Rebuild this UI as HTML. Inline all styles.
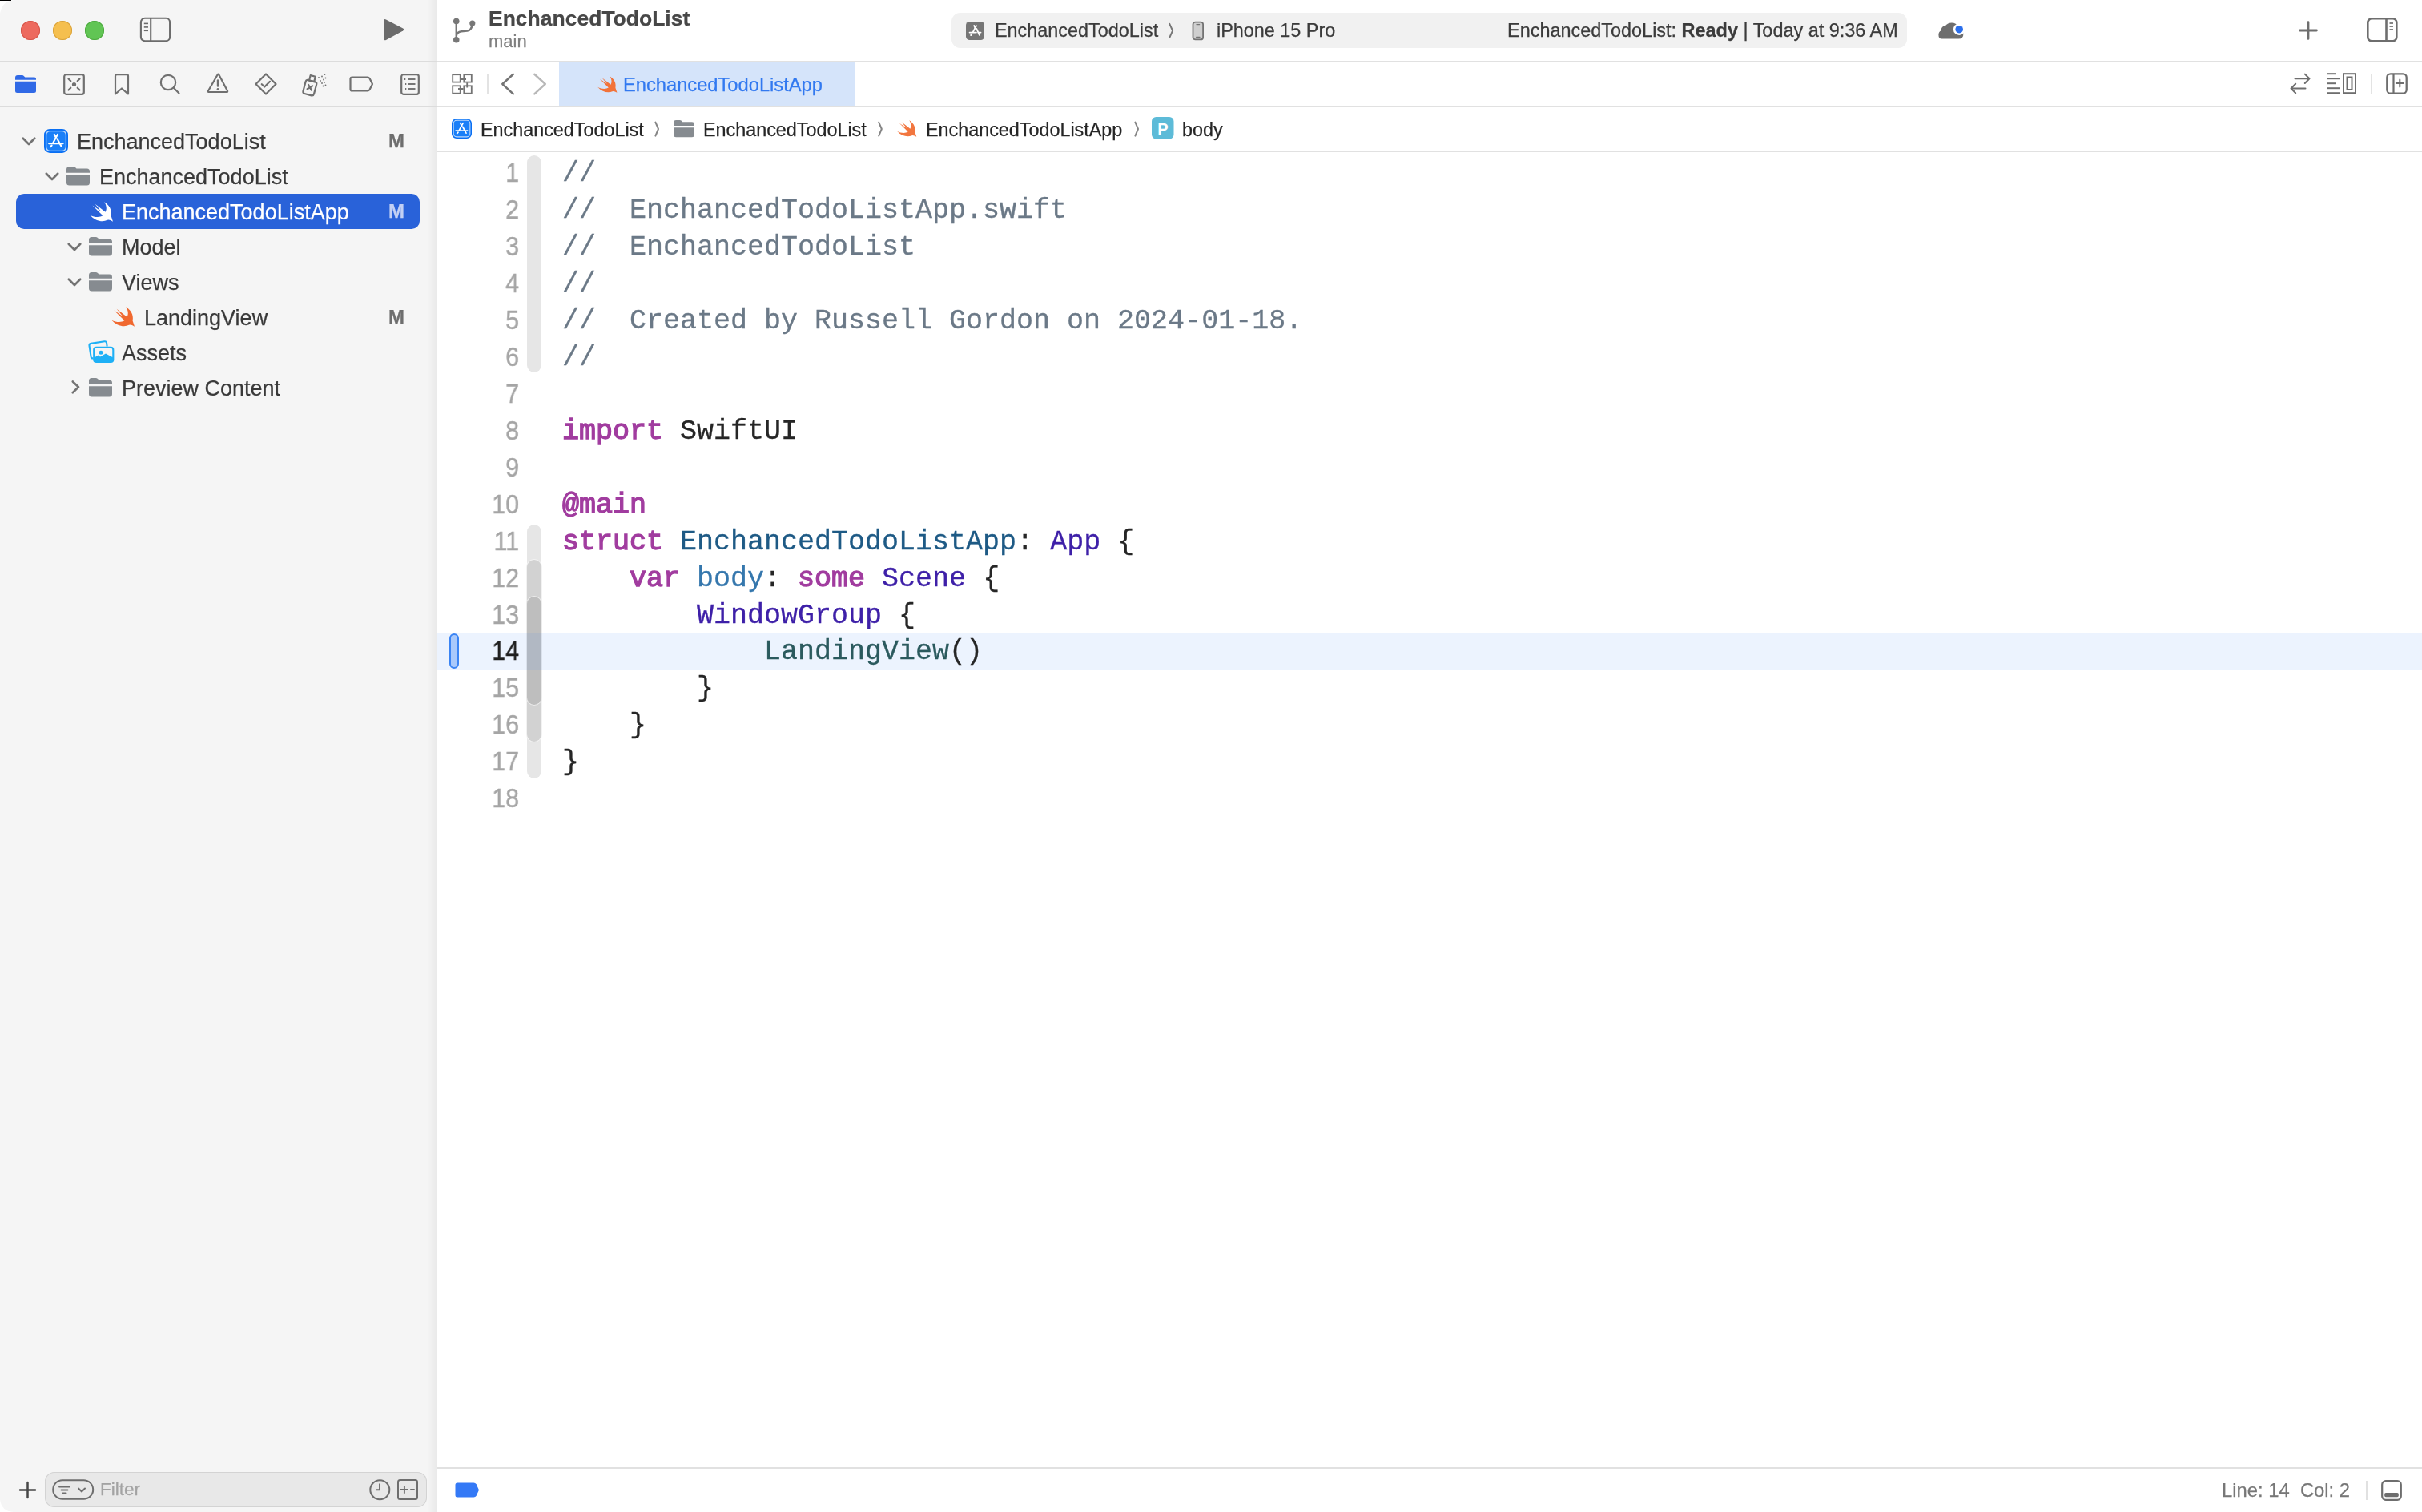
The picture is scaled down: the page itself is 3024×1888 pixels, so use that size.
<!DOCTYPE html>
<html><head><meta charset="utf-8"><title>Xcode</title>
<style>
html,body{margin:0;padding:0;}
body{width:3024px;height:1888px;position:relative;overflow:hidden;background:#ffffff;font-family:"Liberation Sans",sans-serif;}
svg{overflow:visible}
div{will-change:transform}
</style></head><body>
<div style="position:absolute;left:0px;top:0px;width:545px;height:1888px;background:#f5f5f5;"></div>
<div style="position:absolute;left:533px;top:0px;width:12px;height:1888px;background:linear-gradient(to right, rgba(0,0,0,0), rgba(0,0,0,0.045));"></div>
<div style="position:absolute;left:545px;top:0px;width:1px;height:1888px;background:#dddddd;"></div>
<div style="position:absolute;left:0px;top:76px;width:545px;height:2px;background:#dcdcdc;"></div>
<div style="position:absolute;left:546px;top:76px;width:2478px;height:2px;background:#e1e1e1;"></div>
<div style="position:absolute;left:0px;top:132px;width:545px;height:2px;background:#dcdcdc;"></div>
<div style="position:absolute;left:546px;top:132px;width:2478px;height:2px;background:#e1e1e1;"></div>
<div style="position:absolute;left:546px;top:188px;width:2478px;height:2px;background:#e1e1e1;"></div>
<div style="position:absolute;left:546px;top:1832px;width:2478px;height:2px;background:#e1e1e1;"></div>
<div style="position:absolute;left:25.7px;top:25.8px;width:24px;height:24px;border-radius:50%;background:#ed6a5e;box-shadow:inset 0 0 0 1px #d55549"></div>
<div style="position:absolute;left:66.0px;top:25.8px;width:24px;height:24px;border-radius:50%;background:#f5bf4f;box-shadow:inset 0 0 0 1px #d9a23c"></div>
<div style="position:absolute;left:106.0px;top:25.8px;width:24px;height:24px;border-radius:50%;background:#61c554;box-shadow:inset 0 0 0 1px #4ea940"></div>
<svg style="position:absolute;left:174px;top:21px;" width="40" height="32" viewBox="0 0 40 32"><rect x="1.9" y="1.7" width="36.2" height="28.6" rx="5" fill="none" stroke="#6b6b6b" stroke-width="2.1"/><line x1="14.2" y1="2" x2="14.2" y2="30" stroke="#6b6b6b" stroke-width="2.1"/><g stroke="#6b6b6b" stroke-width="1.6"><line x1="5.8" y1="8.4" x2="11" y2="8.4"/><line x1="5.8" y1="12.9" x2="11" y2="12.9"/><line x1="5.8" y1="17.3" x2="11" y2="17.3"/></g></svg>
<svg style="position:absolute;left:478px;top:23px;" width="28" height="30" viewBox="0 0 28 30"><path d="M1.2 3.2 Q1.2 0.2 4 1.5 L25.2 12.6 Q27.6 14 25.2 15.4 L4 26.9 Q1.2 28.3 1.2 25.2 Z" fill="#6b6b6b"/></svg>
<svg style="position:absolute;left:19px;top:93px;" width="27" height="24" viewBox="0 0 27 24"><path d="M0 4 Q0 1 3 1 L8.5 1 Q10 1 11 2.2 L12.3 3.5 L24 3.5 Q26 3.5 26 5.5 L26 6.8 L0 6.8 Z" fill="#3069e6"/><path d="M0 8.8 L26 8.8 L26 20.5 Q26 23 23.5 23 L2.5 23 Q0 23 0 20.5 Z" fill="#3069e6"/></svg>
<svg style="position:absolute;left:79px;top:92px;" width="27" height="27" viewBox="0 0 27 27"><rect x="1.2" y="1.2" width="24.6" height="24.6" rx="2.5" fill="none" stroke="#707070" stroke-width="2.2" stroke-linecap="round" stroke-linejoin="round"/><circle cx="13.5" cy="13.5" r="2.6" fill="#707070"/><path d="M6.5 6.5 L9.3 9.3 M20.5 6.5 L17.7 9.3 M6.5 20.5 L9.3 17.7 M20.5 20.5 L17.7 17.7" fill="none" stroke="#707070" stroke-width="2.2" stroke-linecap="round" stroke-linejoin="round" stroke-width="1.8"/></svg>
<svg style="position:absolute;left:142px;top:92px;" width="20" height="27" viewBox="0 0 20 27"><path d="M2 25.5 L2 3 Q2 1.2 3.8 1.2 L16.2 1.2 Q18 1.2 18 3 L18 25.5 L10 18.5 Z" fill="none" stroke="#707070" stroke-width="2.2" stroke-linecap="round" stroke-linejoin="round"/></svg>
<svg style="position:absolute;left:199px;top:92px;" width="27" height="27" viewBox="0 0 27 27"><circle cx="11" cy="11" r="9.2" fill="none" stroke="#707070" stroke-width="2.2" stroke-linecap="round" stroke-linejoin="round" stroke-width="2.3"/><line x1="17.8" y1="17.8" x2="24.5" y2="24.5" fill="none" stroke="#707070" stroke-width="2.2" stroke-linecap="round" stroke-linejoin="round" stroke-width="2.8"/></svg>
<svg style="position:absolute;left:259px;top:91px;" width="27" height="27" viewBox="0 0 27 27"><path d="M13 1.8 Q13.8 1.5 14.4 2.4 L25 22.5 Q25.6 24 24 24 L2 24 Q0.4 24 1 22.5 Z" fill="none" stroke="#707070" stroke-width="2.2" stroke-linecap="round" stroke-linejoin="round"/><line x1="13" y1="9.5" x2="13" y2="16.5" stroke="#707070" stroke-width="2.4" stroke-linecap="round"/><circle cx="13" cy="20.3" r="1.3" fill="#707070"/></svg>
<svg style="position:absolute;left:318px;top:91px;" width="28" height="28" viewBox="0 0 28 28"><path d="M14 1.5 L26.5 14 L14 26.5 L1.5 14 Z" fill="none" stroke="#707070" stroke-width="2.2" stroke-linecap="round" stroke-linejoin="round"/><path d="M8.8 14.2 L12.3 17.5 L19 10.8" fill="none" stroke="#707070" stroke-width="2.2" stroke-linecap="round" stroke-linejoin="round" stroke-width="2"/></svg>
<svg style="position:absolute;left:377px;top:91px;" width="32" height="30" viewBox="0 0 32 30"><g transform="rotate(15 10 18)"><rect x="3" y="10" width="14" height="17.5" rx="2.5" fill="none" stroke="#707070" stroke-width="2.2" stroke-linecap="round" stroke-linejoin="round" stroke-width="2"/><rect x="6.8" y="3.5" width="6.4" height="6.5" fill="none" stroke="#707070" stroke-width="2.2" stroke-linecap="round" stroke-linejoin="round" stroke-width="1.8"/><path d="M7.3 15.5 L12.7 21 M12.7 15.5 L7.3 21" fill="none" stroke="#707070" stroke-width="2.2" stroke-linecap="round" stroke-linejoin="round" stroke-width="1.6"/></g><g fill="#707070"><circle cx="21" cy="6" r="0.9"/><circle cx="25" cy="4.5" r="0.9"/><circle cx="28.5" cy="2" r="0.9"/><circle cx="23" cy="10" r="0.9"/><circle cx="27" cy="8.5" r="0.9"/><circle cx="29.5" cy="6.5" r="0.9"/><circle cx="25" cy="13" r="0.9"/><circle cx="28" cy="12" r="0.9"/><circle cx="29.5" cy="15.5" r="0.9"/><circle cx="26.5" cy="16.5" r="0.9"/></g></svg>
<svg style="position:absolute;left:436px;top:95px;" width="31" height="20" viewBox="0 0 31 20"><path d="M3.5 1.5 L23 1.5 Q24.5 1.5 25.5 3 L29 10 L25.5 17 Q24.5 18.5 23 18.5 L3.5 18.5 Q1.5 18.5 1.5 16.5 L1.5 3.5 Q1.5 1.5 3.5 1.5 Z" fill="none" stroke="#707070" stroke-width="2.2" stroke-linecap="round" stroke-linejoin="round"/></svg>
<svg style="position:absolute;left:500px;top:92px;" width="24" height="27" viewBox="0 0 24 27"><rect x="1.2" y="1.2" width="21.6" height="24.6" rx="2.5" fill="none" stroke="#707070" stroke-width="2.2" stroke-linecap="round" stroke-linejoin="round"/><g stroke="#707070" stroke-width="1.9"><line x1="5" y1="7" x2="6.3" y2="7"/><line x1="9" y1="7" x2="18.5" y2="7"/><line x1="6" y1="13" x2="7.3" y2="13"/><line x1="10" y1="13" x2="18.5" y2="13"/><line x1="6" y1="19" x2="7.3" y2="19"/><line x1="10" y1="19" x2="18.5" y2="19"/></g></svg>
<svg style="position:absolute;left:27px;top:171px;" width="18" height="11" viewBox="0 0 18 11"><path d="M1.8 1.8 L9 9 L16.2 1.8" fill="none" stroke="#737373" stroke-width="2.7" stroke-linecap="round" stroke-linejoin="round"/></svg>
<svg style="position:absolute;left:54.5px;top:161px;width:30px;height:30px" width="30" height="30" viewBox="0 0 30 30"><rect x="0.8" y="0.8" width="28.4" height="28.4" rx="6.5" fill="#1a7ff8" stroke="#0a6ff3" stroke-width="1.6"/><rect x="2.6" y="2.6" width="24.8" height="24.8" rx="4.8" fill="none" stroke="#bcd8fb" stroke-width="1.3"/><g stroke="#fff" stroke-width="2.1" stroke-linecap="round" fill="none"><path d="M17 6.8 L11.3 17.2"/><path d="M12.8 6.8 L14.4 9.7"/><path d="M16.4 12.3 L21.6 21.8"/><path d="M6.2 18.2 L23.6 18.2"/><path d="M9.6 20.6 L8 22.3"/></g></svg>
<div style="position:absolute;left:96.00px;top:161.44px;font:normal 27px/32.40px 'Liberation Sans', sans-serif;color:#393939;white-space:pre;letter-spacing:0px;-webkit-text-stroke:0.25px #393939;">EnchancedTodoList</div>
<div style="position:absolute;left:485.00px;top:162.28px;font:bold 24px/28.80px 'Liberation Sans', sans-serif;color:#6e6e6e;white-space:pre;letter-spacing:0px;-webkit-text-stroke:0.25px #6e6e6e;">M</div>
<svg style="position:absolute;left:55.5px;top:215px;" width="18" height="11" viewBox="0 0 18 11"><path d="M1.8 1.8 L9 9 L16.2 1.8" fill="none" stroke="#737373" stroke-width="2.7" stroke-linecap="round" stroke-linejoin="round"/></svg>
<svg style="position:absolute;left:83px;top:208px;" width="29" height="24" viewBox="0 0 29 24"><path d="M0 3.5 Q0 0 3.5 0 L8.5 0 Q10 0 11 0.9 L12.5 2.5 L25.5 2.5 Q29 2.5 29 6 L29 7.8 L0 7.8 Z" fill="#868b90"/><path d="M0 10.2 L29 10.2 L29 20 Q29 23.6 25.5 23.6 L3.5 23.6 Q0 23.6 0 20 Z" fill="#868b90"/></svg>
<div style="position:absolute;left:124.00px;top:205.44px;font:normal 27px/32.40px 'Liberation Sans', sans-serif;color:#393939;white-space:pre;letter-spacing:0px;-webkit-text-stroke:0.25px #393939;">EnchancedTodoList</div>
<div style="position:absolute;left:20px;top:242px;width:504px;height:44px;border-radius:10px;background:#2962d9"></div>
<svg style="position:absolute;left:111.5px;top:252px;" width="29" height="25" viewBox="0 0 29 25"><path d="M18.2 0.2 C23.5 3.5 28.2 9 26.6 17.5 L29 24.7 Q24.5 21.8 22 22.8 C16 25.8 7 24 0.2 16.4 C6 19.6 12.5 19.8 16.3 17.3 L3.4 4.5 L14 11.7 L6.7 2.7 L19.6 12.8 C21.8 9 20.8 4 18.2 0.2 Z" fill="#ffffff"/></svg>
<div style="position:absolute;left:152.00px;top:249.44px;font:normal 27px/32.40px 'Liberation Sans', sans-serif;color:#ffffff;white-space:pre;letter-spacing:0px;-webkit-text-stroke:0.25px #ffffff;">EnchancedTodoListApp</div>
<div style="position:absolute;left:485.00px;top:250.28px;font:bold 24px/28.80px 'Liberation Sans', sans-serif;color:#c2d0f4;white-space:pre;letter-spacing:0px;-webkit-text-stroke:0.25px #c2d0f4;">M</div>
<svg style="position:absolute;left:83.5px;top:303px;" width="18" height="11" viewBox="0 0 18 11"><path d="M1.8 1.8 L9 9 L16.2 1.8" fill="none" stroke="#737373" stroke-width="2.7" stroke-linecap="round" stroke-linejoin="round"/></svg>
<svg style="position:absolute;left:111px;top:296px;" width="29" height="24" viewBox="0 0 29 24"><path d="M0 3.5 Q0 0 3.5 0 L8.5 0 Q10 0 11 0.9 L12.5 2.5 L25.5 2.5 Q29 2.5 29 6 L29 7.8 L0 7.8 Z" fill="#868b90"/><path d="M0 10.2 L29 10.2 L29 20 Q29 23.6 25.5 23.6 L3.5 23.6 Q0 23.6 0 20 Z" fill="#868b90"/></svg>
<div style="position:absolute;left:152.00px;top:293.44px;font:normal 27px/32.40px 'Liberation Sans', sans-serif;color:#393939;white-space:pre;letter-spacing:0px;-webkit-text-stroke:0.25px #393939;">Model</div>
<svg style="position:absolute;left:83.5px;top:347px;" width="18" height="11" viewBox="0 0 18 11"><path d="M1.8 1.8 L9 9 L16.2 1.8" fill="none" stroke="#737373" stroke-width="2.7" stroke-linecap="round" stroke-linejoin="round"/></svg>
<svg style="position:absolute;left:111px;top:340px;" width="29" height="24" viewBox="0 0 29 24"><path d="M0 3.5 Q0 0 3.5 0 L8.5 0 Q10 0 11 0.9 L12.5 2.5 L25.5 2.5 Q29 2.5 29 6 L29 7.8 L0 7.8 Z" fill="#868b90"/><path d="M0 10.2 L29 10.2 L29 20 Q29 23.6 25.5 23.6 L3.5 23.6 Q0 23.6 0 20 Z" fill="#868b90"/></svg>
<div style="position:absolute;left:152.00px;top:337.44px;font:normal 27px/32.40px 'Liberation Sans', sans-serif;color:#393939;white-space:pre;letter-spacing:0px;-webkit-text-stroke:0.25px #393939;">Views</div>
<svg style="position:absolute;left:139.2px;top:382.7px;" width="29" height="25" viewBox="0 0 29 25"><path d="M18.2 0.2 C23.5 3.5 28.2 9 26.6 17.5 L29 24.7 Q24.5 21.8 22 22.8 C16 25.8 7 24 0.2 16.4 C6 19.6 12.5 19.8 16.3 17.3 L3.4 4.5 L14 11.7 L6.7 2.7 L19.6 12.8 C21.8 9 20.8 4 18.2 0.2 Z" fill="#f0682f"/></svg>
<div style="position:absolute;left:180.00px;top:381.44px;font:normal 27px/32.40px 'Liberation Sans', sans-serif;color:#393939;white-space:pre;letter-spacing:0px;-webkit-text-stroke:0.25px #393939;">LandingView</div>
<div style="position:absolute;left:485.00px;top:382.28px;font:bold 24px/28.80px 'Liberation Sans', sans-serif;color:#6e6e6e;white-space:pre;letter-spacing:0px;-webkit-text-stroke:0.25px #6e6e6e;">M</div>
<svg style="position:absolute;left:109px;top:425px;" width="34" height="28" viewBox="0 0 34 28"><g fill="none" stroke="#1eb0f6" stroke-width="2.1" stroke-linejoin="round"><path d="M7.5 22.5 Q5 22.8 4.6 20.5 L2.5 6.6 Q2.2 4.3 4.5 3.9 L21.5 1.3 Q23.7 1 24.1 3.2 L24.6 7.5"/><rect x="8.2" y="8.8" width="24.1" height="18.2" rx="3"/></g><circle cx="17" cy="15.2" r="2.5" fill="#1eb0f6"/><path d="M8.2 21.8 L13.8 18.6 L16 20.6 L23 16.4 L32.3 21.6 L32.3 24 Q32.3 27 29.3 27 L11.2 27 Q8.2 27 8.2 24 Z" fill="#1eb0f6"/></svg>
<div style="position:absolute;left:152.00px;top:425.44px;font:normal 27px/32.40px 'Liberation Sans', sans-serif;color:#393939;white-space:pre;letter-spacing:0px;-webkit-text-stroke:0.25px #393939;">Assets</div>
<svg style="position:absolute;left:88.5px;top:475px;" width="11" height="17" viewBox="0 0 11 17"><path d="M1.8 1.5 L9 8.3 L1.8 15.2" fill="none" stroke="#737373" stroke-width="2.7" stroke-linecap="round" stroke-linejoin="round"/></svg>
<svg style="position:absolute;left:111px;top:472px;" width="29" height="24" viewBox="0 0 29 24"><path d="M0 3.5 Q0 0 3.5 0 L8.5 0 Q10 0 11 0.9 L12.5 2.5 L25.5 2.5 Q29 2.5 29 6 L29 7.8 L0 7.8 Z" fill="#868b90"/><path d="M0 10.2 L29 10.2 L29 20 Q29 23.6 25.5 23.6 L3.5 23.6 Q0 23.6 0 20 Z" fill="#868b90"/></svg>
<div style="position:absolute;left:152.00px;top:469.44px;font:normal 27px/32.40px 'Liberation Sans', sans-serif;color:#393939;white-space:pre;letter-spacing:0px;-webkit-text-stroke:0.25px #393939;">Preview Content</div>
<svg style="position:absolute;left:565px;top:22px;" width="30" height="33" viewBox="0 0 30 33"><g fill="#777777"><circle cx="4.75" cy="4.5" r="3.8"/><circle cx="4.75" cy="27.8" r="3.8"/><circle cx="24.8" cy="7" r="3.6"/></g><path d="M4.75 5 L4.75 27 M4.75 23 Q5.5 17.8 11 17.2 L18.5 16.5 Q23.5 16 24.6 9" fill="none" stroke="#777777" stroke-width="2.4"/></svg>
<div style="position:absolute;left:610.00px;top:7.92px;font:bold 26.5px/31.80px 'Liberation Sans', sans-serif;color:#474747;white-space:pre;letter-spacing:0px;-webkit-text-stroke:0.25px #474747;">EnchancedTodoList</div>
<div style="position:absolute;left:610.00px;top:39.18px;font:normal 22px/26.40px 'Liberation Sans', sans-serif;color:#7f7f7f;white-space:pre;letter-spacing:0px;-webkit-text-stroke:0.25px #7f7f7f;">main</div>
<div style="position:absolute;left:1188px;top:16px;width:1193px;height:44px;border-radius:11px;background:#f1f1f1"></div>
<svg style="position:absolute;left:1206px;top:27px;" width="24" height="23" viewBox="0 0 24 23"><rect x="0" y="0" width="23" height="23" rx="4.5" fill="#767676"/><g stroke="#fff" stroke-width="1.9" stroke-linecap="round" fill="none"><path d="M12.9 5.2 L8.8 13.1"/><path d="M10.2 5 L11.2 7.1"/><path d="M13.2 8.9 L16.9 16.8"/><path d="M4.6 13.6 L12.9 13.6 M15.6 13.6 L18.5 13.6"/><path d="M7.1 15.6 L6.2 17.1"/></g></svg>
<div style="position:absolute;left:1242.00px;top:23.85px;font:normal 23.4px/28.08px 'Liberation Sans', sans-serif;color:#3b3b3b;white-space:pre;letter-spacing:0px;-webkit-text-stroke:0.25px #3b3b3b;">EnchancedTodoList</div>
<svg style="position:absolute;left:1457px;top:26px;" width="10" height="24" viewBox="0 0 10 24"><path d="M3.30 3.80 L7.10 12.30 L3.30 20.90" fill="none" stroke="#777777" stroke-width="2" stroke-linecap="round" stroke-linejoin="round"/></svg>
<svg style="position:absolute;left:1487px;top:26px;" width="17" height="25" viewBox="0 0 17 25"><rect x="2.5" y="1.6" width="12.6" height="21.8" rx="3" fill="#cfcfcf" stroke="#737373" stroke-width="1.8"/><line x1="6.9" y1="4.6" x2="10.7" y2="4.6" stroke="#737373" stroke-width="1.1" stroke-linecap="round"/><line x1="6.6" y1="20.4" x2="11" y2="20.4" stroke="#737373" stroke-width="1.1" stroke-linecap="round"/></svg>
<div style="position:absolute;left:1519.00px;top:23.85px;font:normal 23.4px/28.08px 'Liberation Sans', sans-serif;color:#3b3b3b;white-space:pre;letter-spacing:0px;-webkit-text-stroke:0.25px #3b3b3b;">iPhone 15 Pro</div>
<div style="position:absolute;left:1882.00px;top:23.80px;font:normal 23.45px/28.14px 'Liberation Sans', sans-serif;color:#3b3b3b;white-space:pre;letter-spacing:0px;-webkit-text-stroke:0.25px #3b3b3b;">EnchancedTodoList: <b>Ready</b> | Today at 9:36 AM</div>
<svg style="position:absolute;left:2419px;top:27px;" width="36" height="24" viewBox="0 0 36 24"><path d="M5.5 21.6 Q1.4 21.6 1.4 16.5 Q1.4 12.6 4.7 11.2 Q4.6 5.6 9.8 5.2 Q12.6 1.4 17.8 1.4 Q23.5 1.4 26 6.5 Q31.8 8.5 32.4 14.5 Q32.6 21.6 26.5 21.6 Z" fill="#6e6e6e"/><circle cx="27.2" cy="9.7" r="7.3" fill="#ffffff"/><circle cx="27.2" cy="9.7" r="4.8" fill="#2b6fec"/></svg>
<svg style="position:absolute;left:2870px;top:26px;" width="24" height="24" viewBox="0 0 24 24"><path d="M12 1.6 L12 22.4 M1.6 12 L22.4 12" stroke="#6e6e6e" stroke-width="2.8" stroke-linecap="round"/></svg>
<svg style="position:absolute;left:2954px;top:21px;" width="40" height="32" viewBox="0 0 40 32"><rect x="2.3" y="2.3" width="36" height="28" rx="5" fill="none" stroke="#6e6e6e" stroke-width="2.6"/><line x1="25.5" y1="2.5" x2="25.5" y2="30" stroke="#6e6e6e" stroke-width="2.6"/><g stroke="#6e6e6e" stroke-width="1.7"><line x1="29.5" y1="8" x2="34" y2="8"/><line x1="29.5" y1="12" x2="34" y2="12"/><line x1="29.5" y1="16" x2="34" y2="16"/></g></svg>
<svg style="position:absolute;left:563px;top:91px;" width="28" height="28" viewBox="0 0 28 28"><g fill="none" stroke="#747474" stroke-width="1.8"><rect x="2.2" y="2.2" width="9.5" height="9.4"/><rect x="16.3" y="2.2" width="9.5" height="9.4"/><rect x="2.2" y="16.3" width="9.5" height="9.4"/><rect x="16.3" y="16.3" width="9.5" height="9.4"/><path d="M12.5 8 L19 8 M20.2 12.2 L20.2 18.6 M9 20 L15.5 20"/></g></svg>
<div style="position:absolute;left:608px;top:93px;width:2px;height:24px;background:#e3e3e3;"></div>
<svg style="position:absolute;left:623px;top:91px;" width="22" height="28" viewBox="0 0 22 28"><path d="M17.8 1.8 L4.3 14 L17.8 26.4" fill="none" stroke="#747474" stroke-width="2.5" stroke-linecap="round" stroke-linejoin="round"/></svg>
<svg style="position:absolute;left:663px;top:91px;" width="22" height="28" viewBox="0 0 22 28"><path d="M4.3 1.8 L17.8 14 L4.3 26.4" fill="none" stroke="#b8b8b8" stroke-width="2.5" stroke-linecap="round" stroke-linejoin="round"/></svg>
<div style="position:absolute;left:698px;top:78px;width:370px;height:54px;background:#d5e4fa;"></div>
<svg style="position:absolute;left:745.5px;top:94.5px;" width="24.5" height="21" viewBox="0 0 29 25"><path d="M18.2 0.2 C23.5 3.5 28.2 9 26.6 17.5 L29 24.7 Q24.5 21.8 22 22.8 C16 25.8 7 24 0.2 16.4 C6 19.6 12.5 19.8 16.3 17.3 L3.4 4.5 L14 11.7 L6.7 2.7 L19.6 12.8 C21.8 9 20.8 4 18.2 0.2 Z" fill="#f2733a"/></svg>
<div style="position:absolute;left:778.00px;top:91.57px;font:normal 23.7px/28.44px 'Liberation Sans', sans-serif;color:#3279f0;white-space:pre;letter-spacing:0px;-webkit-text-stroke:0.25px #3279f0;">EnchancedTodoListApp</div>
<svg style="position:absolute;left:2858px;top:91px;" width="29" height="29" viewBox="0 0 29 29"><g fill="none" stroke="#6e6e6e" stroke-width="2" stroke-linecap="round" stroke-linejoin="round"><path d="M7.5 7.3 L25.5 7.3 M19.8 1.6 L25.5 7.3 L19.8 13"/><path d="M20.5 19.5 L2.5 19.5 M8.2 13.8 L2.5 19.5 L8.2 25.2"/></g></svg>
<svg style="position:absolute;left:2904px;top:91px;" width="40" height="28" viewBox="0 0 40 28"><g stroke="#6e6e6e" stroke-width="2"><line x1="2" y1="1.2" x2="13" y2="1.2"/><line x1="2" y1="7.2" x2="17" y2="7.2"/><line x1="2" y1="13.2" x2="13" y2="13.2"/><line x1="2" y1="19.2" x2="17" y2="19.2"/><line x1="2" y1="25.2" x2="17" y2="25.2"/></g><rect x="22" y="1.2" width="15" height="24" fill="none" stroke="#6e6e6e" stroke-width="2"/><rect x="26.5" y="5.5" width="6" height="15.5" fill="none" stroke="#6e6e6e" stroke-width="2"/></svg>
<div style="position:absolute;left:2960px;top:93px;width:2px;height:24px;background:#e3e3e3;"></div>
<svg style="position:absolute;left:2979px;top:91px;" width="28" height="28" viewBox="0 0 28 28"><rect x="1.3" y="1.3" width="24.4" height="24.4" rx="4.5" fill="none" stroke="#6e6e6e" stroke-width="2.3"/><line x1="9.5" y1="2" x2="9.5" y2="25" stroke="#6e6e6e" stroke-width="2.2"/><path d="M17.3 8.5 L17.3 17.5 M12.8 13 L21.8 13" stroke="#6e6e6e" stroke-width="2" stroke-linecap="round"/></svg>
<svg style="position:absolute;left:563.5px;top:148px;width:25px;height:25px" width="30" height="30" viewBox="0 0 30 30"><rect x="0.8" y="0.8" width="28.4" height="28.4" rx="6.5" fill="#1a7ff8" stroke="#0a6ff3" stroke-width="1.6"/><rect x="2.6" y="2.6" width="24.8" height="24.8" rx="4.8" fill="none" stroke="#bcd8fb" stroke-width="1.3"/><g stroke="#fff" stroke-width="2.1" stroke-linecap="round" fill="none"><path d="M17 6.8 L11.3 17.2"/><path d="M12.8 6.8 L14.4 9.7"/><path d="M16.4 12.3 L21.6 21.8"/><path d="M6.2 18.2 L23.6 18.2"/><path d="M9.6 20.6 L8 22.3"/></g></svg>
<div style="position:absolute;left:600.00px;top:147.90px;font:normal 23.35px/28.02px 'Liberation Sans', sans-serif;color:#262626;white-space:pre;letter-spacing:0px;-webkit-text-stroke:0.25px #262626;">EnchancedTodoList</div>
<svg style="position:absolute;left:815px;top:149px;" width="10" height="24" viewBox="0 0 10 24"><path d="M3.40 3.60 L7.00 12.00 L3.40 20.70" fill="none" stroke="#858585" stroke-width="2" stroke-linecap="round" stroke-linejoin="round"/></svg>
<svg style="position:absolute;left:841px;top:150px;" width="26" height="21.5" viewBox="0 0 29 24"><path d="M0 3.5 Q0 0 3.5 0 L8.5 0 Q10 0 11 0.9 L12.5 2.5 L25.5 2.5 Q29 2.5 29 6 L29 7.8 L0 7.8 Z" fill="#868b90"/><path d="M0 10.2 L29 10.2 L29 20 Q29 23.6 25.5 23.6 L3.5 23.6 Q0 23.6 0 20 Z" fill="#868b90"/></svg>
<div style="position:absolute;left:878.00px;top:147.90px;font:normal 23.35px/28.02px 'Liberation Sans', sans-serif;color:#262626;white-space:pre;letter-spacing:0px;-webkit-text-stroke:0.25px #262626;">EnchancedTodoList</div>
<svg style="position:absolute;left:1094px;top:149px;" width="10" height="24" viewBox="0 0 10 24"><path d="M3.20 3.60 L6.80 12.00 L3.20 20.70" fill="none" stroke="#858585" stroke-width="2" stroke-linecap="round" stroke-linejoin="round"/></svg>
<svg style="position:absolute;left:1120px;top:150px;" width="24.3" height="21" viewBox="0 0 29 25"><path d="M18.2 0.2 C23.5 3.5 28.2 9 26.6 17.5 L29 24.7 Q24.5 21.8 22 22.8 C16 25.8 7 24 0.2 16.4 C6 19.6 12.5 19.8 16.3 17.3 L3.4 4.5 L14 11.7 L6.7 2.7 L19.6 12.8 C21.8 9 20.8 4 18.2 0.2 Z" fill="#f2763f"/></svg>
<div style="position:absolute;left:1156.00px;top:147.90px;font:normal 23.35px/28.02px 'Liberation Sans', sans-serif;color:#262626;white-space:pre;letter-spacing:0px;-webkit-text-stroke:0.25px #262626;">EnchancedTodoListApp</div>
<svg style="position:absolute;left:1414px;top:149px;" width="10" height="24" viewBox="0 0 10 24"><path d="M3.40 3.60 L7.00 12.00 L3.40 20.70" fill="none" stroke="#858585" stroke-width="2" stroke-linecap="round" stroke-linejoin="round"/></svg>
<svg style="position:absolute;left:1438px;top:146px;" width="28" height="28" viewBox="0 0 28 28"><rect x="0" y="0" width="27.5" height="27.5" rx="5.5" fill="#5dbbd8"/><text x="13.8" y="21.5" text-anchor="middle" font-family="Liberation Sans" font-weight="bold" font-size="20" fill="#ffffff">P</text></svg>
<div style="position:absolute;left:1476.00px;top:147.90px;font:normal 23.35px/28.02px 'Liberation Sans', sans-serif;color:#262626;white-space:pre;letter-spacing:0px;-webkit-text-stroke:0.25px #262626;">body</div>
<div style="position:absolute;left:658px;top:194px;width:18px;height:271px;border-radius:9px;background:#e6e6e6"></div>
<div style="position:absolute;left:658px;top:655px;width:18px;height:317px;border-radius:9px;background:#e6e6e6"></div>
<div style="position:absolute;left:658px;top:699px;width:18px;height:227px;border-radius:9px;background:#d2d2d2;box-shadow:0 0 0 1px #f2f2f2"></div>
<div style="position:absolute;left:658px;top:745px;width:18px;height:135px;border-radius:9px;background:#bebebe;box-shadow:0 0 0 1px #ebebeb"></div>
<div style="position:absolute;left:546px;top:790px;width:2478px;height:46px;background:rgba(64,140,245,0.1)"></div>
<div style="position:absolute;left:561px;top:791px;width:11.5px;height:44px;border-radius:6px;background:#a9c9fb;border:2px solid #3a84f4;box-sizing:border-box"></div>
<div style="position:absolute;left:560px;width:88px;top:194.00px;height:45.96px;font:32.5px/45.96px 'Liberation Sans', sans-serif;text-align:right;color:#a5a5a5;-webkit-text-stroke:0.45px #a5a5a5;white-space:pre;transform:scaleX(0.93);transform-origin:100% 50%">1</div>
<div style="position:absolute;left:560px;width:88px;top:239.96px;height:45.96px;font:32.5px/45.96px 'Liberation Sans', sans-serif;text-align:right;color:#a5a5a5;-webkit-text-stroke:0.45px #a5a5a5;white-space:pre;transform:scaleX(0.93);transform-origin:100% 50%">2</div>
<div style="position:absolute;left:560px;width:88px;top:285.92px;height:45.96px;font:32.5px/45.96px 'Liberation Sans', sans-serif;text-align:right;color:#a5a5a5;-webkit-text-stroke:0.45px #a5a5a5;white-space:pre;transform:scaleX(0.93);transform-origin:100% 50%">3</div>
<div style="position:absolute;left:560px;width:88px;top:331.88px;height:45.96px;font:32.5px/45.96px 'Liberation Sans', sans-serif;text-align:right;color:#a5a5a5;-webkit-text-stroke:0.45px #a5a5a5;white-space:pre;transform:scaleX(0.93);transform-origin:100% 50%">4</div>
<div style="position:absolute;left:560px;width:88px;top:377.84px;height:45.96px;font:32.5px/45.96px 'Liberation Sans', sans-serif;text-align:right;color:#a5a5a5;-webkit-text-stroke:0.45px #a5a5a5;white-space:pre;transform:scaleX(0.93);transform-origin:100% 50%">5</div>
<div style="position:absolute;left:560px;width:88px;top:423.80px;height:45.96px;font:32.5px/45.96px 'Liberation Sans', sans-serif;text-align:right;color:#a5a5a5;-webkit-text-stroke:0.45px #a5a5a5;white-space:pre;transform:scaleX(0.93);transform-origin:100% 50%">6</div>
<div style="position:absolute;left:560px;width:88px;top:469.76px;height:45.96px;font:32.5px/45.96px 'Liberation Sans', sans-serif;text-align:right;color:#a5a5a5;-webkit-text-stroke:0.45px #a5a5a5;white-space:pre;transform:scaleX(0.93);transform-origin:100% 50%">7</div>
<div style="position:absolute;left:560px;width:88px;top:515.72px;height:45.96px;font:32.5px/45.96px 'Liberation Sans', sans-serif;text-align:right;color:#a5a5a5;-webkit-text-stroke:0.45px #a5a5a5;white-space:pre;transform:scaleX(0.93);transform-origin:100% 50%">8</div>
<div style="position:absolute;left:560px;width:88px;top:561.68px;height:45.96px;font:32.5px/45.96px 'Liberation Sans', sans-serif;text-align:right;color:#a5a5a5;-webkit-text-stroke:0.45px #a5a5a5;white-space:pre;transform:scaleX(0.93);transform-origin:100% 50%">9</div>
<div style="position:absolute;left:560px;width:88px;top:607.64px;height:45.96px;font:32.5px/45.96px 'Liberation Sans', sans-serif;text-align:right;color:#a5a5a5;-webkit-text-stroke:0.45px #a5a5a5;white-space:pre;transform:scaleX(0.93);transform-origin:100% 50%">10</div>
<div style="position:absolute;left:560px;width:88px;top:653.60px;height:45.96px;font:32.5px/45.96px 'Liberation Sans', sans-serif;text-align:right;color:#a5a5a5;-webkit-text-stroke:0.45px #a5a5a5;white-space:pre;transform:scaleX(0.93);transform-origin:100% 50%">11</div>
<div style="position:absolute;left:560px;width:88px;top:699.56px;height:45.96px;font:32.5px/45.96px 'Liberation Sans', sans-serif;text-align:right;color:#a5a5a5;-webkit-text-stroke:0.45px #a5a5a5;white-space:pre;transform:scaleX(0.93);transform-origin:100% 50%">12</div>
<div style="position:absolute;left:560px;width:88px;top:745.52px;height:45.96px;font:32.5px/45.96px 'Liberation Sans', sans-serif;text-align:right;color:#a5a5a5;-webkit-text-stroke:0.45px #a5a5a5;white-space:pre;transform:scaleX(0.93);transform-origin:100% 50%">13</div>
<div style="position:absolute;left:560px;width:88px;top:791.48px;height:45.96px;font:32.5px/45.96px 'Liberation Sans', sans-serif;text-align:right;color:#1f1f1f;-webkit-text-stroke:0.45px #1f1f1f;white-space:pre;transform:scaleX(0.93);transform-origin:100% 50%">14</div>
<div style="position:absolute;left:560px;width:88px;top:837.44px;height:45.96px;font:32.5px/45.96px 'Liberation Sans', sans-serif;text-align:right;color:#a5a5a5;-webkit-text-stroke:0.45px #a5a5a5;white-space:pre;transform:scaleX(0.93);transform-origin:100% 50%">15</div>
<div style="position:absolute;left:560px;width:88px;top:883.40px;height:45.96px;font:32.5px/45.96px 'Liberation Sans', sans-serif;text-align:right;color:#a5a5a5;-webkit-text-stroke:0.45px #a5a5a5;white-space:pre;transform:scaleX(0.93);transform-origin:100% 50%">16</div>
<div style="position:absolute;left:560px;width:88px;top:929.36px;height:45.96px;font:32.5px/45.96px 'Liberation Sans', sans-serif;text-align:right;color:#a5a5a5;-webkit-text-stroke:0.45px #a5a5a5;white-space:pre;transform:scaleX(0.93);transform-origin:100% 50%">17</div>
<div style="position:absolute;left:560px;width:88px;top:975.32px;height:45.96px;font:32.5px/45.96px 'Liberation Sans', sans-serif;text-align:right;color:#a5a5a5;-webkit-text-stroke:0.45px #a5a5a5;white-space:pre;transform:scaleX(0.93);transform-origin:100% 50%">18</div>
<div style="position:absolute;left:702px;top:195.00px;height:45.96px;font:35px/45.96px 'Liberation Mono', monospace;white-space:pre;color:#262626;-webkit-text-stroke:0.3px currentColor"><span style="color:#6b7987">//</span></div>
<div style="position:absolute;left:702px;top:240.96px;height:45.96px;font:35px/45.96px 'Liberation Mono', monospace;white-space:pre;color:#262626;-webkit-text-stroke:0.3px currentColor"><span style="color:#6b7987">//  EnchancedTodoListApp.swift</span></div>
<div style="position:absolute;left:702px;top:286.92px;height:45.96px;font:35px/45.96px 'Liberation Mono', monospace;white-space:pre;color:#262626;-webkit-text-stroke:0.3px currentColor"><span style="color:#6b7987">//  EnchancedTodoList</span></div>
<div style="position:absolute;left:702px;top:332.88px;height:45.96px;font:35px/45.96px 'Liberation Mono', monospace;white-space:pre;color:#262626;-webkit-text-stroke:0.3px currentColor"><span style="color:#6b7987">//</span></div>
<div style="position:absolute;left:702px;top:378.84px;height:45.96px;font:35px/45.96px 'Liberation Mono', monospace;white-space:pre;color:#262626;-webkit-text-stroke:0.3px currentColor"><span style="color:#6b7987">//  Created by Russell Gordon on 2024-01-18.</span></div>
<div style="position:absolute;left:702px;top:424.80px;height:45.96px;font:35px/45.96px 'Liberation Mono', monospace;white-space:pre;color:#262626;-webkit-text-stroke:0.3px currentColor"><span style="color:#6b7987">//</span></div>
<div style="position:absolute;left:702px;top:516.72px;height:45.96px;font:35px/45.96px 'Liberation Mono', monospace;white-space:pre;color:#262626;-webkit-text-stroke:0.3px currentColor"><span style="color:#a13c9f;-webkit-text-stroke:1.3px #a13c9f">import</span><span style="color:#262626"> SwiftUI</span></div>
<div style="position:absolute;left:702px;top:608.64px;height:45.96px;font:35px/45.96px 'Liberation Mono', monospace;white-space:pre;color:#262626;-webkit-text-stroke:0.3px currentColor"><span style="color:#a13c9f;-webkit-text-stroke:1.3px #a13c9f">@main</span></div>
<div style="position:absolute;left:702px;top:654.60px;height:45.96px;font:35px/45.96px 'Liberation Mono', monospace;white-space:pre;color:#262626;-webkit-text-stroke:0.3px currentColor"><span style="color:#a13c9f;-webkit-text-stroke:1.3px #a13c9f">struct</span><span style="color:#262626"> </span><span style="color:#1e5a85">EnchancedTodoListApp</span><span style="color:#262626">: </span><span style="color:#3e20a8">App</span><span style="color:#262626"> {</span></div>
<div style="position:absolute;left:702px;top:700.56px;height:45.96px;font:35px/45.96px 'Liberation Mono', monospace;white-space:pre;color:#262626;-webkit-text-stroke:0.3px currentColor"><span style="color:#262626">    </span><span style="color:#a13c9f;-webkit-text-stroke:1.3px #a13c9f">var</span><span style="color:#262626"> </span><span style="color:#3577ad">body</span><span style="color:#262626">: </span><span style="color:#a13c9f;-webkit-text-stroke:1.3px #a13c9f">some</span><span style="color:#262626"> </span><span style="color:#3e20a8">Scene</span><span style="color:#262626"> {</span></div>
<div style="position:absolute;left:702px;top:746.52px;height:45.96px;font:35px/45.96px 'Liberation Mono', monospace;white-space:pre;color:#262626;-webkit-text-stroke:0.3px currentColor"><span style="color:#262626">        </span><span style="color:#3e20a8">WindowGroup</span><span style="color:#262626"> {</span></div>
<div style="position:absolute;left:702px;top:792.48px;height:45.96px;font:35px/45.96px 'Liberation Mono', monospace;white-space:pre;color:#262626;-webkit-text-stroke:0.3px currentColor"><span style="color:#262626">            </span><span style="color:#2b5a5e">LandingView</span><span style="color:#262626">()</span></div>
<div style="position:absolute;left:702px;top:838.44px;height:45.96px;font:35px/45.96px 'Liberation Mono', monospace;white-space:pre;color:#262626;-webkit-text-stroke:0.3px currentColor"><span style="color:#262626">        }</span></div>
<div style="position:absolute;left:702px;top:884.40px;height:45.96px;font:35px/45.96px 'Liberation Mono', monospace;white-space:pre;color:#262626;-webkit-text-stroke:0.3px currentColor"><span style="color:#262626">    }</span></div>
<div style="position:absolute;left:702px;top:930.36px;height:45.96px;font:35px/45.96px 'Liberation Mono', monospace;white-space:pre;color:#262626;-webkit-text-stroke:0.3px currentColor"><span style="color:#262626">}</span></div>
<svg style="position:absolute;left:23px;top:1849px;" width="24" height="24" viewBox="0 0 24 24"><path d="M11.5 2 L11.5 21 M2 11.5 L21 11.5" stroke="#474747" stroke-width="2.5" stroke-linecap="round"/></svg>
<div style="position:absolute;left:56px;top:1838px;width:477px;height:44px;border-radius:12px;background:#e8e8e8;box-shadow:inset 0 0 0 1px #d3d3d3"></div>
<svg style="position:absolute;left:65px;top:1847px;" width="53" height="26" viewBox="0 0 53 26"><rect x="1.2" y="1.2" width="50" height="23.5" rx="11.75" fill="none" stroke="#6e6e6e" stroke-width="2"/><g stroke="#6e6e6e" stroke-width="1.9" stroke-linecap="round"><line x1="9" y1="9.5" x2="22" y2="9.5"/><line x1="11.5" y1="13.5" x2="19.5" y2="13.5"/><line x1="13.5" y1="17.5" x2="17.5" y2="17.5"/></g><path d="M33 11.5 L37 15.5 L41 11.5" fill="none" stroke="#6e6e6e" stroke-width="2" stroke-linecap="round" stroke-linejoin="round"/></svg>
<div style="position:absolute;left:125.00px;top:1846.20px;font:normal 22.5px/27.00px 'Liberation Sans', sans-serif;color:#a3a3a3;white-space:pre;letter-spacing:0px;-webkit-text-stroke:0.25px #a3a3a3;">Filter</div>
<svg style="position:absolute;left:461px;top:1847px;" width="27" height="27" viewBox="0 0 27 27"><circle cx="13.3" cy="13.3" r="12" fill="none" stroke="#6e6e6e" stroke-width="2"/><path d="M13 5.5 L13 13.3 L8.5 13.3" fill="none" stroke="#6e6e6e" stroke-width="1.9"/></svg>
<svg style="position:absolute;left:496px;top:1847px;" width="26" height="26" viewBox="0 0 26 26"><rect x="1" y="1" width="24" height="24" rx="2.5" fill="none" stroke="#6e6e6e" stroke-width="2"/><path d="M4 13 L13.8 13 M8.9 8.2 L8.9 17.8 M16.2 13 L21.7 13" stroke="#6e6e6e" stroke-width="1.9"/></svg>
<svg style="position:absolute;left:568px;top:1851px;" width="31" height="20" viewBox="0 0 31 20"><path d="M3 0.5 L23.5 0.5 Q25.5 0.5 26.7 2.3 L30 9.5 L26.7 16.7 Q25.5 18.5 23.5 18.5 L3 18.5 Q0.5 18.5 0.5 16 L0.5 3 Q0.5 0.5 3 0.5 Z" fill="#3479f6"/></svg>
<div style="position:absolute;left:2774.00px;top:1847.47px;font:normal 23.8px/28.56px 'Liberation Sans', sans-serif;color:#777777;white-space:pre;letter-spacing:0px;-webkit-text-stroke:0.25px #777777;">Line: 14  Col: 2</div>
<div style="position:absolute;left:2954px;top:1849px;width:2px;height:24px;background:#e1e1e1;"></div>
<svg style="position:absolute;left:2973px;top:1848px;" width="27" height="26" viewBox="0 0 27 26"><rect x="1.2" y="1.2" width="23.6" height="23.6" rx="4.5" fill="none" stroke="#6e6e6e" stroke-width="2.2"/><rect x="4.2" y="16" width="17.6" height="5.2" rx="1.6" fill="#6e6e6e"/></svg>
<svg style="position:absolute;left:0px;top:0px;" width="20" height="20" viewBox="0 0 20 20"><path d="M0 0 L18 0 Q3 0.5 0 17 Z" fill="#ffffff"/></svg>
<div style="position:absolute;left:0px;top:0px;width:14px;height:1px;background:#000000;"></div>
<svg style="position:absolute;left:0px;top:1868px;" width="20" height="20" viewBox="0 0 20 20"><path d="M0 20 L17 20 Q1.5 19 0 4 Z" fill="#ffffff"/></svg>
</body></html>
